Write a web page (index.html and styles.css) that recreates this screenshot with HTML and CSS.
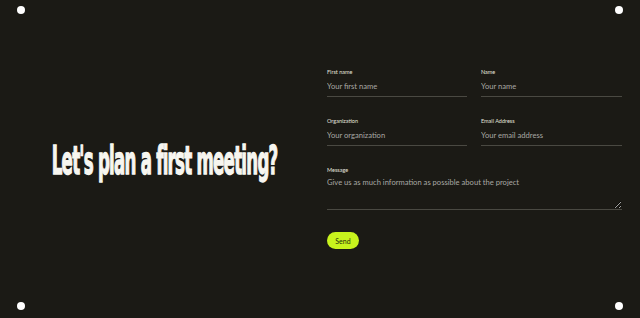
FILE: index.html
```html
<!DOCTYPE html>
<html lang="en">
<head>
<meta charset="utf-8">
<title>Contact</title>
<link rel="stylesheet" href="styles.css">
</head>
<body>
<div class="page">
  <span class="dot dot-tl"></span>
  <span class="dot dot-tr"></span>
  <span class="dot dot-bl"></span>
  <span class="dot dot-br"></span>
  <section class="intro">
    <h1 class="title">Let's plan a first meeting?</h1>
  </section>
  <form class="form">
    <div class="grid">
      <label class="field">
        <span class="label">First name</span>
        <input class="input" type="text" placeholder="Your first name">
      </label>
      <label class="field">
        <span class="label">Name</span>
        <input class="input" type="text" placeholder="Your name">
      </label>
      <label class="field">
        <span class="label">Organization</span>
        <input class="input" type="text" placeholder="Your organization">
      </label>
      <label class="field">
        <span class="label">Email Address</span>
        <input class="input" type="email" placeholder="Your email address">
      </label>
    </div>
    <label class="field field-wide">
      <span class="label">Message</span>
      <textarea class="input textarea" placeholder="Give us as much information as possible about the project"></textarea>
    </label>
    <button class="send" type="button">Send</button>
  </form>
</div>
</body>
</html>
```
FILE: styles.css
```css
html, body {
  margin: 0;
  padding: 0;
  background: #1b1a15;
}
.page {
  position: relative;
  width: 640px;
  height: 318px;
  display: flex;
  background: #1b1a15;
  font-family: "Lato", "Liberation Sans", sans-serif;
  color: #e4e3dc;
  overflow: hidden;
}
.dot {
  position: absolute;
  width: 8px;
  height: 8px;
  border-radius: 50%;
  background: #ffffff;
}
.dot-tl { left: 17px; top: 6px; }
.dot-tr { left: 615px; top: 6px; }
.dot-bl { left: 17px; top: 302px; }
.dot-br { left: 615px; top: 302px; }

.intro {
  width: 327px;
  display: flex;
  align-items: center;
  justify-content: center;
}
.title {
  margin: 0;
  padding-left: 4px;
  padding-top: 2px;
  font-family: "DejaVu Sans Condensed", "DejaVu Sans", sans-serif;
  font-weight: 700;
  font-size: 39px;
  letter-spacing: -1.6px;
  color: #f7f6f0;
  -webkit-text-stroke: 1.3px #f7f6f0;
  white-space: nowrap;
  transform: scaleX(0.475);
}
.form {
  width: 295px;
  padding-top: 69px;
  display: flex;
  flex-direction: column;
}
.grid {
  display: grid;
  grid-template-columns: 140px 141px;
  column-gap: 14px;
  row-gap: 21px;
}
.field {
  display: flex;
  flex-direction: column;
}
.field-wide {
  margin-top: 21px;
}
.label {
  font-size: 5.5px;
  line-height: 7px;
  color: #e4e3dc;
  margin-bottom: 3px;
}
.input {
  box-sizing: border-box;
  height: 18px;
  padding: 0 0 4px 0;
  margin: 0;
  border: none;
  border-bottom: 1px solid #4a4942;
  background: transparent;
  font-family: "Lato", "Liberation Sans", sans-serif;
  font-size: 7.6px;
  color: #e4e3dc;
  outline: none;
}
.input::placeholder {
  color: #a8a8a4;
}
.textarea {
  height: 33px;
  padding: 1px 0 0 0;
  resize: vertical;
  line-height: 9px;
}
.send {
  align-self: flex-start;
  margin-top: 22px;
  width: 32px;
  height: 17px;
  border: none;
  border-radius: 9px;
  background: #c8f31d;
  color: #24300a;
  font-family: "Lato", "Liberation Sans", sans-serif;
  font-size: 7px;
  padding: 0;
}
```
